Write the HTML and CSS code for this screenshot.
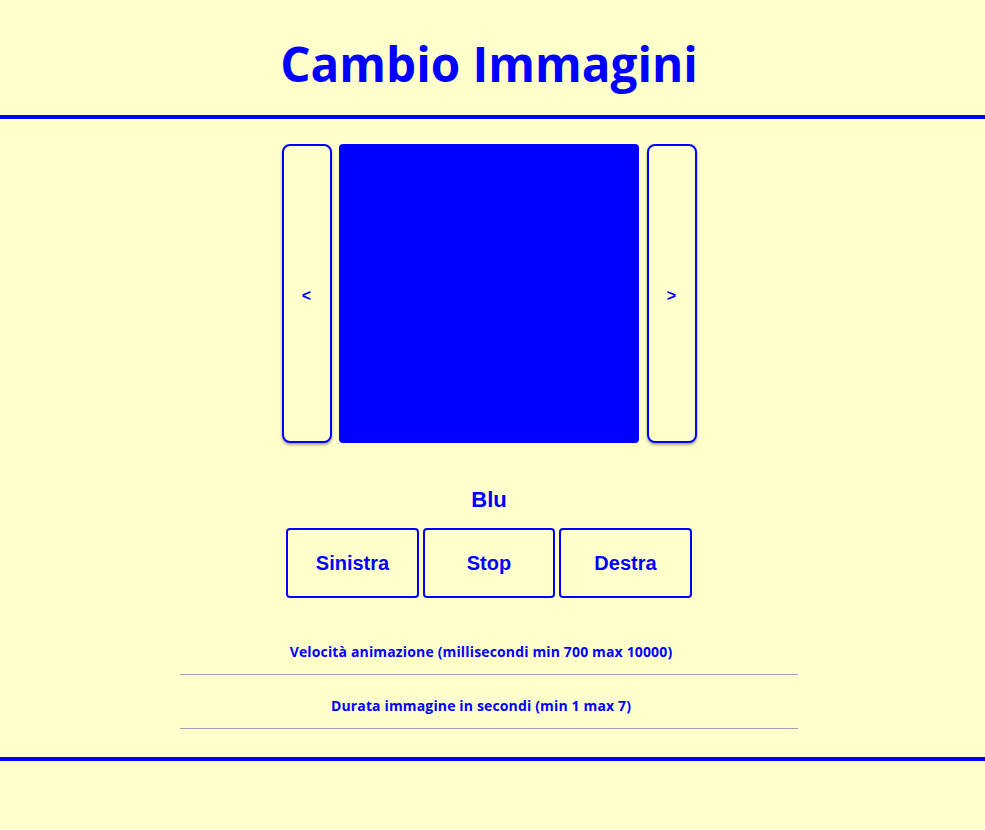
FILE: index.html
```html
<!DOCTYPE html>
<html lang="it">
<head>
<meta charset="utf-8">
<title>Cambio Immagini</title>
<link rel="stylesheet" href="styles.css">
</head>
<body>
<header class="top">
  <h1 class="title">Cambio Immagini</h1>
</header>
<main class="content">
  <div class="carousel">
    <button class="side side-left">&lt;</button>
    <div class="picture"></div>
    <button class="side side-right">&gt;</button>
  </div>
  <div class="caption">Blu</div>
  <div class="controls">
    <button class="ctrl">Sinistra</button>
    <button class="ctrl ctrl-mid">Stop</button>
    <button class="ctrl">Destra</button>
  </div>
  <div class="setting setting-first">Velocità animazione (millisecondi min 700 max 10000)</div>
  <div class="setting">Durata immagine in secondi (min 1 max 7)</div>
</main>
<footer class="bottom"></footer>
</body>
</html>
```
FILE: styles.css
```css
html, body {
  margin: 0;
  padding: 0;
  background: #ffffcc;
  color: #0000ff;
}

.top {
  height: 119px;
  border-bottom: 4px solid #0000ff;
  display: flex;
  justify-content: center;
  padding-right: 7px;
  box-sizing: border-box;
}

.title {
  margin: 0;
  padding-top: 34px;
  font-family: "Open Sans", "Noto Sans", sans-serif;
  font-weight: 700;
  font-size: 47.6px;
  line-height: 60px;
  color: #0000ff;
}

.content {
  display: flex;
  flex-direction: column;
  align-items: center;
  padding-top: 25px;
  padding-right: 7px;
}

.carousel {
  display: flex;
  height: 299px;
}

.side {
  width: 50px;
  height: 299px;
  box-sizing: border-box;
  border: 2px solid #0000ff;
  border-radius: 8px;
  background: #ffffcc;
  color: #0000ff;
  font-family: "Liberation Sans", Arial, sans-serif;
  font-weight: 700;
  font-size: 16px;
  box-shadow: 0 2px 3px rgba(0, 0, 0, 0.35);
  padding: 5px 0 0;
}

.side-left { margin-right: 7px; }
.side-right { margin-left: 8px; }

.picture {
  width: 300px;
  height: 299px;
  background: #0000ff;
  border-radius: 4px;
}

.caption {
  margin-top: 44px;
  font-family: "Liberation Sans", Arial, sans-serif;
  font-weight: 700;
  font-size: 22px;
  line-height: 26px;
}

.controls {
  margin-top: 15px;
  display: flex;
  gap: 4px;
}

.ctrl {
  width: 133px;
  height: 70px;
  box-sizing: border-box;
  border: 2px solid #0000ff;
  border-radius: 4px;
  background: #ffffcc;
  color: #0000ff;
  font-family: "Liberation Sans", Arial, sans-serif;
  font-weight: 700;
  font-size: 20px;
  padding: 0;
}

.ctrl-mid { width: 132px; }

.setting {
  width: 618px;
  box-sizing: border-box;
  margin-top: 21px;
  padding: 0 16px 12px 0;
  border-bottom: 1px solid #a0a0b0;
  text-align: center;
  font-family: "Open Sans", "Noto Sans", sans-serif;
  font-weight: 700;
  font-size: 14px;
  letter-spacing: 0.15px;
  line-height: 20px;
}

.setting-first { margin-top: 44px; }

.bottom {
  margin-top: 28px;
  border-top: 4px solid #0000ff;
  height: 0;
}
```
